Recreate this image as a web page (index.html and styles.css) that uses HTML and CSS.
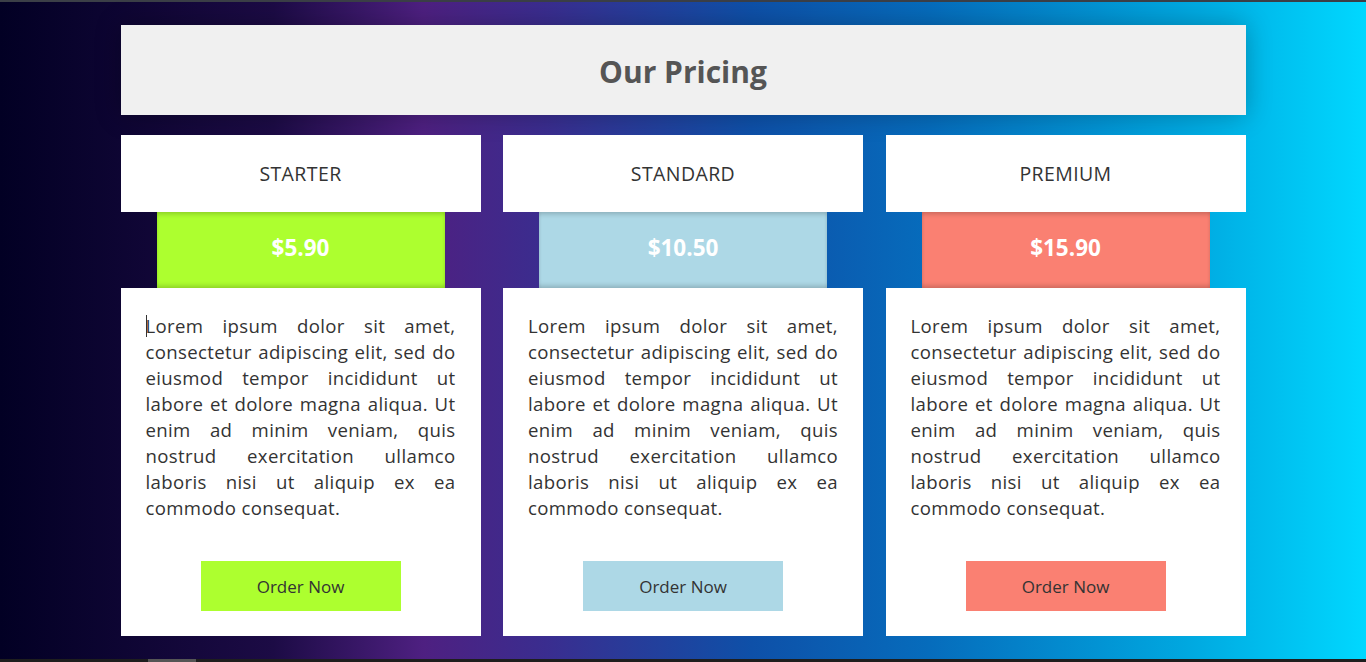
FILE: index.html
```html
<!DOCTYPE html>
<html lang="en">
<head>
<meta charset="utf-8">
<title>Our Pricing</title>
<link rel="stylesheet" href="styles.css">
</head>
<body>
<div class="topbar"></div>
<main class="page">
  <div class="wrap">
    <header class="banner"><h1>Our Pricing</h1></header>
    <section class="cards">
      <article class="card">
        <div class="card-head">STARTER</div>
        <div class="price price-lime">$5.90</div>
        <div class="card-body">
          <p class="desc"><span class="caret"></span>Lorem ipsum dolor sit amet, consectetur adipiscing elit, sed do eiusmod tempor incididunt ut labore et dolore magna aliqua. Ut enim ad minim veniam, quis nostrud exercitation ullamco laboris nisi ut aliquip ex ea commodo consequat.</p>
          <a class="btn btn-lime" href="#">Order Now</a>
        </div>
      </article>
      <article class="card">
        <div class="card-head">STANDARD</div>
        <div class="price price-blue">$10.50</div>
        <div class="card-body">
          <p class="desc">Lorem ipsum dolor sit amet, consectetur adipiscing elit, sed do eiusmod tempor incididunt ut labore et dolore magna aliqua. Ut enim ad minim veniam, quis nostrud exercitation ullamco laboris nisi ut aliquip ex ea commodo consequat.</p>
          <a class="btn btn-blue" href="#">Order Now</a>
        </div>
      </article>
      <article class="card">
        <div class="card-head">PREMIUM</div>
        <div class="price price-salmon">$15.90</div>
        <div class="card-body">
          <p class="desc">Lorem ipsum dolor sit amet, consectetur adipiscing elit, sed do eiusmod tempor incididunt ut labore et dolore magna aliqua. Ut enim ad minim veniam, quis nostrud exercitation ullamco laboris nisi ut aliquip ex ea commodo consequat.</p>
          <a class="btn btn-salmon" href="#">Order Now</a>
        </div>
      </article>
    </section>
  </div>
</main>
<div class="bottombar"><div class="thumb"></div></div>
</body>
</html>
```
FILE: styles.css
```css
* { box-sizing: border-box; }
html, body { margin: 0; padding: 0; }
body {
  height: 662px;
  overflow: hidden;
  display: flex;
  flex-direction: column;
  font-family: "Open Sans", "Liberation Sans", sans-serif;
  background: linear-gradient(90deg, #020024 0%, #1c0b45 20%, #4e2081 31%, #3a2d8f 40%, #0e50a8 55%, #066cbc 68%, #00a8e0 87%, #00d8ff 100%);
}
.topbar {
  height: 2px;
  background: #3b3f47;
  flex: none;
}
.page {
  flex: 1;
  padding-top: 23px;
}
.wrap {
  width: 1125px;
  margin: 0 auto;
}
.banner {
  height: 90px;
  background: #f0f0f0;
  display: flex;
  align-items: center;
  justify-content: center;
  box-shadow: 0 0 24px rgba(0, 0, 0, 0.25);
}
.banner h1 {
  margin: 0;
  font-size: 30px;
  font-weight: 700;
  color: #555555;
  padding-top: 2px;
}
.cards {
  margin-top: 20px;
  display: flex;
  justify-content: space-between;
}
.card {
  width: 360px;
  display: flex;
  flex-direction: column;
}
.card-head {
  height: 77px;
  background: #ffffff;
  display: flex;
  align-items: center;
  justify-content: center;
  font-size: 19.5px;
  color: #333333;
  letter-spacing: 0.4px;
}
.price {
  width: 288px;
  height: 76px;
  margin: 0 auto;
  display: flex;
  align-items: center;
  justify-content: center;
  padding-bottom: 6px;
  font-size: 22.5px;
  font-weight: 700;
  color: #ffffff;
  box-shadow: inset 0 4px 5px -2px rgba(0,0,0,0.2), inset 0 -4px 5px -2px rgba(0,0,0,0.2);
}
.price-lime { background: #adff2f; }
.price-blue { background: #add8e6; }
.price-salmon { background: #fa8072; }
.card-body {
  background: #ffffff;
  padding: 25px 25px 25px;
  display: flex;
  flex-direction: column;
  align-items: center;
}
.desc {
  margin: 0 0 40px;
  font-size: 18.6px;
  letter-spacing: 0.35px;
  line-height: 26px;
  color: #333333;
  text-align: justify;
  width: 100%;
  position: relative;
}
.caret {
  position: absolute;
  left: 0;
  top: 2px;
  width: 1px;
  height: 22px;
  background: #333333;
}
.btn {
  display: flex;
  align-items: center;
  justify-content: center;
  width: 200px;
  height: 50px;
  font-size: 17px;
  color: #333333;
  text-decoration: none;
}
.btn-lime { background: #adff2f; }
.btn-blue { background: #add8e6; }
.btn-salmon { background: #fa8072; }
.bottombar {
  height: 3px;
  background: #1e1e1e;
  flex: none;
  position: relative;
}
.thumb {
  position: absolute;
  left: 148px;
  top: 0;
  width: 48px;
  height: 3px;
  background: #555555;
}
```
